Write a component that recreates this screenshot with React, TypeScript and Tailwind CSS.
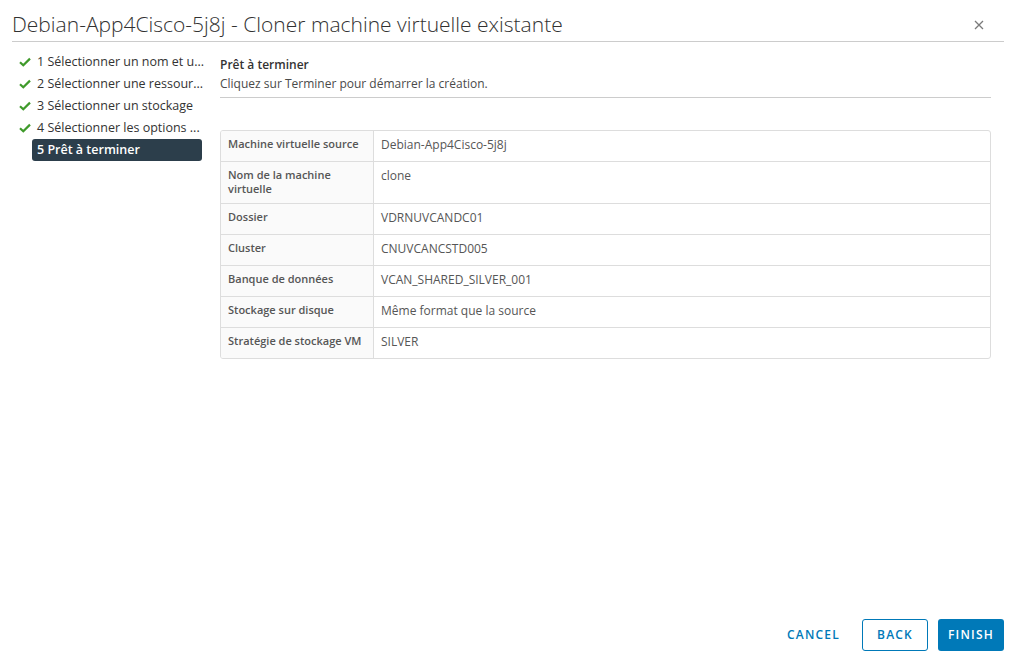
import React from "react";

const steps = [
  { label: "1 Sélectionner un nom et u...", done: true },
  { label: "2 Sélectionner une ressour...", done: true },
  { label: "3 Sélectionner un stockage", done: true },
  { label: "4 Sélectionner les options ...", done: true },
  { label: "5 Prêt à terminer", done: false, active: true },
];

const rows = [
  ["Machine virtuelle source", "Debian-App4Cisco-5j8j"],
  ["Nom de la machine virtuelle", "clone"],
  ["Dossier", "VDRNUVCANDC01"],
  ["Cluster", "CNUVCANCSTD005"],
  ["Banque de données", "VCAN_SHARED_SILVER_001"],
  ["Stockage sur disque", "Même format que la source"],
  ["Stratégie de stockage VM", "SILVER"],
];

function Check() {
  return (
    <svg width="12" height="10" viewBox="0 0 12 10" className="shrink-0">
      <path d="M1 5.2 L4.3 8.3 L11 1.6" fill="none" stroke="#3f9a2b" strokeWidth="2.2" />
    </svg>
  );
}

export default function App() {
  return (
    <div className="relative flex h-[657px] w-[1013px] flex-col bg-white font-['Open_Sans',sans-serif] text-[#333]">
      {/* header */}
      <div className="ml-[12px] mr-[9px] flex h-[42px] items-start justify-between border-b border-[#cccccc]">
        <h1 className="pt-[10px] text-[21px] font-light leading-[29px] text-[#313131]">
          Debian-App4Cisco-5j8j - Cloner machine virtuelle existante
        </h1>
        <button className="mr-[20px] mt-[20px] text-[#777]">
          <svg width="10" height="10" viewBox="0 0 10 10">
            <path d="M1 1 L9 9 M9 1 L1 9" stroke="#7a7a7a" strokeWidth="1.3" />
          </svg>
        </button>
      </div>

      <div className="flex flex-1">
        {/* steps */}
        <nav className="ml-[12px] mt-[9px] flex w-[190px] flex-col">
          {steps.map((s) => (
            <div key={s.label} className="flex h-[22px] items-center">
              <div className="flex w-[20px] justify-end pr-[1px]">{s.done && <Check />}</div>
              <span
                className={
                  s.active
                    ? "flex h-[22px] w-[170px] items-center rounded-[3px] bg-[#2c3e4b] pl-[5px] text-[12.5px] font-semibold text-white"
                    : "w-[170px] pl-[5px] text-[12.5px] font-medium whitespace-nowrap text-[#333]"
                }
              >
                {s.label}
              </span>
            </div>
          ))}
        </nav>

        {/* content */}
        <div className="ml-[18px] mr-[22px] mt-[13px] flex flex-1 flex-col">
          <div className="border-b border-[#cccccc] pb-[4px]">
            <div className="text-[12px] font-semibold leading-[19px] text-[#333]">Prêt à terminer</div>
            <div className="text-[12px] leading-[19px] text-[#4a4a4a]">Cliquez sur Terminer pour démarrer la création.</div>
          </div>

          <div className="mt-[32px] overflow-hidden rounded-[3px] border border-[#dddddd]">
            {rows.map(([k, v], i) => (
              <div
                key={k}
                className={`grid grid-cols-[153px_1fr] ${i < rows.length - 1 ? "border-b border-[#dddddd]" : ""}`}
              >
                <div className="border-r border-[#dddddd] bg-[#fafafa] pb-[7px] pl-[7px] pr-[8px] pt-[6px] text-[11px] font-semibold leading-[14px] text-[#565656]">
                  {k}
                </div>
                <div className="pb-[7px] pl-[7px] pt-[5px] text-[12px] leading-[18px] text-[#565656]">{v}</div>
              </div>
            ))}
          </div>
        </div>
      </div>

      {/* footer */}
      <div className="mb-[6px] mr-[9px] flex justify-end gap-[10px]">
        <button className="h-[32px] px-[12px] text-[12px] font-semibold tracking-[1.2px] text-[#0079b8]">CANCEL</button>
        <button className="h-[32px] w-[66px] rounded-[3px] border border-[#0079b8] text-[12px] font-semibold tracking-[1.2px] text-[#0079b8]">
          BACK
        </button>
        <button className="h-[32px] w-[66px] rounded-[3px] bg-[#0079b8] text-[12px] font-semibold tracking-[1.2px] text-white">
          FINISH
        </button>
      </div>
    </div>
  );
}
